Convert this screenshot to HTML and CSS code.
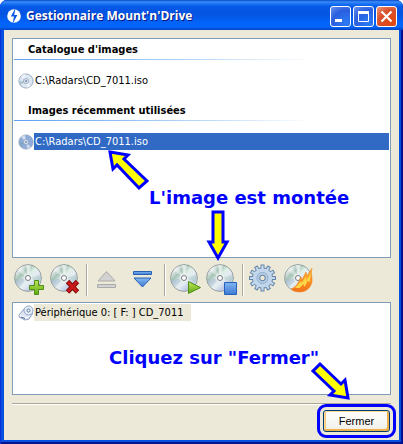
FILE: index.html
```html
<!DOCTYPE html>
<html lang="fr">
<head>
<meta charset="utf-8">
<title>Gestionnaire Mount'n'Drive</title>
<link rel="stylesheet" href="styles.css">
</head>
<body>
<svg class="defs" aria-hidden="true">
  <defs>
    <linearGradient id="silver" x1="0" y1="0" x2="1" y2="1">
      <stop offset="0" stop-color="#c4c8cc"/><stop offset=".18" stop-color="#e3e8e8"/>
      <stop offset=".32" stop-color="#a5c3b6"/><stop offset=".46" stop-color="#e0efe6"/>
      <stop offset=".6" stop-color="#e4ebf3"/><stop offset=".75" stop-color="#c0cae4"/>
      <stop offset="1" stop-color="#eef1f2"/>
    </linearGradient>
    <linearGradient id="green" x1="0" y1="0" x2="0" y2="1">
      <stop offset="0" stop-color="#c0e65a"/><stop offset="1" stop-color="#62a916"/>
    </linearGradient>
    <linearGradient id="blue" x1="0" y1="0" x2="0" y2="1">
      <stop offset="0" stop-color="#83b6f2"/><stop offset="1" stop-color="#3c79d2"/>
    </linearGradient>
    <linearGradient id="fire" x1="0" y1="0" x2="0" y2="1">
      <stop offset="0" stop-color="#ffb52e"/><stop offset="1" stop-color="#f4701a"/>
    </linearGradient>
    <symbol id="disc" viewBox="0 0 28 28">
      <circle cx="14" cy="14" r="13.4" fill="url(#silver)" stroke="#8d9a9a" stroke-width=".9"/>
      <path d="M14 14 3.500 6.500A13 13 0 0 1 8 2.500Z" fill="#fff" opacity=".4"/>
      <path d="M14 14 12 1.200A13 13 0 0 1 17 1.400Z" fill="#fff" opacity=".6"/>
      <path d="M14 14 1.200 16A13 13 0 0 0 5 23Z" fill="#aab8da" opacity=".5"/>
      <path d="M14 14 26.800 11A13 13 0 0 1 26.500 18Z" fill="#b0cfc4" opacity=".5"/>
      <circle cx="14" cy="14" r="4.500" fill="#e9edf0" opacity=".8"/>
      <circle cx="14" cy="14" r="2.500" fill="#fff" stroke="#777e80"/>
    </symbol>
    <symbol id="mini" viewBox="0 0 16 16">
      <circle cx="8" cy="8" r="7.100" fill="currentColor" stroke="#94a7be" stroke-width=".9"/>
      <path d="M8 8 3 3a7 7 0 0 1 4-1.800Z" fill="#fff" opacity=".6"/>
      <path d="M8 8 1.400 8.500a7 7 0 0 0 1.300 3Z" fill="#739fa5" opacity=".5"/>
      <path d="M8 8 13 13a7 7 0 0 1-4 1.800Z" fill="#fff" opacity=".5"/>
      <circle cx="8" cy="8" r="2.500" fill="#dfe8f4" stroke="#8d9fb9" stroke-width=".8"/>
      <circle cx="8" cy="8" r=".9" fill="#6681a0"/>
    </symbol>
  </defs>
</svg>
<main class="window">
  <header class="titlebar">
    <svg class="app-icon" viewBox="0 0 16 16" aria-hidden="true">
      <circle cx="8" cy="8" r="6.800" fill="#fff"/>
      <path d="M9.500 0 4.800 8.600H8L6.500 16l4.900-8.900H8.200Z" fill="#0757e6"/>
    </svg>
    <h1>Gestionnaire Mount'n'Drive</h1>
    <div class="controls">
      <button class="ctl" aria-label="Réduire"><svg viewBox="0 0 21 21"><path d="M5 13h7v3H5Z" fill="#fff"/></svg></button>
      <button class="ctl" aria-label="Agrandir"><svg viewBox="0 0 21 21"><path d="M5.500 5.500h10v10h-10Z" fill="none" stroke="#fff"/><path d="M5 5h11v3H5Z" fill="#fff"/></svg></button>
      <button class="ctl close" aria-label="Fermer la fenêtre"><svg viewBox="0 0 21 21"><path d="m5.500 5.500 10 10m0-10-10 10" stroke="#fff" stroke-width="2.200"/></svg></button>
    </div>
  </header>
  <div class="client">
    <section class="panel images">
      <h2>Catalogue d'images</h2>
      <div class="row"><svg class="small" aria-hidden="true"><use href="#mini"/></svg><span class="name">C:\Radars\CD_7011.iso</span></div>
      <h2>Images récemment utilisées</h2>
      <div class="row selected"><svg class="small" aria-hidden="true"><use href="#mini"/></svg><span class="name">C:\Radars\CD_7011.iso</span></div>
      <svg class="arrow arrow-image" viewBox="0 0 44 44" aria-hidden="true"><path d="m4 4 18 3-4 4 23 22-8 7-22-23-4 4Z"/></svg>
      <p class="note note-image">L'image est montée</p>
      <svg class="arrow arrow-tool" viewBox="0 0 26 54" aria-hidden="true"><path d="M8 3h10v30h4l-9 16-9-16h4Z"/></svg>
    </section>
    <nav class="toolbar" aria-label="Outils">
      <button class="tool" aria-label="Ajouter une image"><svg viewBox="0 0 32 32"><use href="#disc" width="28" height="28"/><path d="M20.500 16.500h4v5h5v4h-5v5h-4v-5h-5v-4h5Z" fill="url(#green)" stroke="#4b9015"/></svg></button>
      <button class="tool" aria-label="Supprimer l'image"><svg viewBox="0 0 32 32"><use href="#disc" width="28" height="28"/><path d="m17.500 17.500 10 10.500m0-10.500-10 10.500" stroke="#850b0b" stroke-width="4.800"/><path d="m18 18 9 9.500m0-9.500-9 9.500" stroke="#c71a1a" stroke-width="2.800"/></svg></button>
      <span class="rule"></span>
      <button class="tool" aria-label="Éjecter"><svg viewBox="0 0 32 32"><path d="M14.500 7.500 23 17H6Z" fill="#d2d2d2" stroke="#aaa"/><path d="M5.500 20.500h18v3h-18Z" fill="#d2d2d2" stroke="#aaa"/></svg></button>
      <button class="tool" aria-label="Monter"><svg viewBox="0 0 32 32"><path d="M5.500 7.500h18v3h-18Z" fill="url(#blue)" stroke="#2761b5"/><path d="M6 14h17l-8.500 9Z" fill="url(#blue)" stroke="#2761b5"/></svg></button>
      <span class="rule"></span>
      <button class="tool" aria-label="Monter l'image"><svg viewBox="0 0 32 32"><use href="#disc" width="28" height="28"/><path d="M18.500 17.500 30.500 23.500 18.500 29.500Z" fill="url(#green)" stroke="#4b9015"/></svg></button>
      <button class="tool" aria-label="Démonter l'image"><svg viewBox="0 0 32 32"><use href="#disc" width="28" height="28"/><path d="M18.500 18.500h12v12h-12Z" fill="url(#blue)" stroke="#2662bc"/></svg></button>
      <span class="rule"></span>
      <button class="tool" aria-label="Préférences"><svg viewBox="0 0 32 32">
        <path d="M1 14h27M14.500.500v27M2.800 7.250 26.200 20.750M7.750 2.300 21.250 25.700M2.800 20.750 26.200 7.250M7.750 25.700 21.250 2.300" stroke="#6485aa" stroke-width="4"/>
        <circle cx="14.500" cy="14" r="10.200" fill="#c2d7ec" stroke="#6485aa"/>
        <path d="M2 14h25M14.500 1.500v25M3.700 7.750 25.300 20.250M8.250 3.200 20.750 24.800M3.700 20.250 25.300 7.750M8.250 24.800 20.750 3.200" stroke="#c2d7ec" stroke-width="2.200"/>
        <circle cx="14.500" cy="14" r="5.500" fill="#b5cde5" stroke="#8fadcd"/>
        <circle cx="14.500" cy="14" r="2.800" fill="#ece9d8" stroke="#5b7b9f"/></svg></button>
      <button class="tool" aria-label="Graver"><svg viewBox="0 0 32 32"><use href="#disc" width="28" height="28"/><path d="M7 25c3-1 5-3 7-6l3-6 1 3 4-8 1 4 5-8c-1 4-.5 7 0 10 1 8-5 14-12 14-4 0-7-1-9-3Z" fill="url(#fire)" stroke="#f08a20" stroke-width=".6"/><path d="m11 24 6-7 .5 2 5-7-.5 5 5-8-1.500 9-2-1-3 6-1-3-4 4Z" fill="#ffd84a"/></svg></button>
    </nav>
    <section class="panel devices">
      <div class="row device"><svg class="small" viewBox="0 0 16 16" aria-hidden="true"><path d="m1 10 5-6 9 4-4 6-4 1-6-3Z" fill="#dfe6f3" stroke="#8ea1c2"/><path d="m1.500 10.500 7 2.500 5-5" fill="none" stroke="#fff"/><circle cx="10.500" cy="5.500" r="4.500" fill="#e6edf7" stroke="#8fa3c6"/><circle cx="10.500" cy="5.500" r="1.500" fill="#fff" stroke="#5774a0"/><path d="m3 12 4 1.500" stroke="#4a669e"/></svg><span class="name">Périphérique 0: [ F: ] CD_7011</span></div>
      <p class="note note-close">Cliquez sur "Fermer"</p>
    </section>
    <footer class="footer">
      <div class="action">
        <button class="push">Fermer</button>
        <svg class="arrow arrow-close" viewBox="0 0 44 42" aria-hidden="true"><path d="m10 4-7 7 21 20-4 4 18 3-3-18-4 4Z"/></svg>
      </div>
    </footer>
  </div>
</main>
</body>
</html>
```
FILE: styles.css
```css
* { box-sizing: border-box; }
body { margin: 0; background: #fff; font: 11px/18px "DejaVu Sans Condensed", "DejaVu Sans", sans-serif; font-stretch: condensed; color: #000; }
h1, h2, p { margin: 0; }
button { padding: 0; border: 0; background: none; font: inherit; color: inherit; }
svg { display: block; }
.defs { position: absolute; width: 0; height: 0; }
.window {
  display: flex; flex-direction: column; min-height: 100vh;
  padding: 0 4px 4px; border-radius: 7px 7px 0 0; background: #0650e0;
  box-shadow: inset 1px 0 #0831d9, inset -2px 0 #00138c, inset 0 -2px #00138c;
}
.titlebar {
  display: flex; align-items: center; gap: 4px; height: 30px; margin: 0 -4px; padding: 2px 6px 0 6px;
  border-radius: 7px 7px 0 0;
  background: linear-gradient(#0a4bcc 0, #3b8cf8 2px, #1670f4 4px, #0558e5 7px, #0554e2 14px, #0265fb 24px, #0264f8 27px, #0144c4 30px);
}
.app-icon { width: 16px; height: 16px; }
h1 { flex: 1; font: bold 12px/20px "Open Sans", sans-serif; color: #fff; text-shadow: 1px 1px #0a1883; white-space: nowrap; }
.controls { display: flex; gap: 2px; }
.ctl { width: 21px; height: 21px; border: 1px solid #fff; border-radius: 3px; background: radial-gradient(circle at 80% 85%, #2c7bf5, #2b5fdf 60%, #6b93ee); }
.ctl svg { width: 21px; height: 21px; margin: -1px; }
.close { background: radial-gradient(circle at 80% 85%, #e3480f, #d8502c 60%, #ee9a80); }
.client { flex: 1; display: flex; flex-direction: column; padding: 8px 8px 0; background: #ece9d8; }
.panel { position: relative; border: 1px solid #7f9db9; background: #fff; }
.images { flex: 1; padding: 3px 1px 0; }
h2 { height: 18px; padding-left: 14px; font-size: 11px; line-height: 16px; background: linear-gradient(90deg, #5ba0f2, #b9d8f8 50%, #fff 80%) bottom / 100% 1px no-repeat; }
.row { display: flex; align-items: center; padding-left: 4px; }
.images .row { margin: 12px 0; }
.small { width: 16px; height: 16px; color: #dce6f1; }
.name { height: 17px; padding: 0 1px; line-height: 17px; white-space: nowrap; }
.images h2 + .row { margin-bottom: 14px; }
.selected .name { flex: 1; background: #316ac5; color: #fff; }
.selected .small { color: #8eabd9; }
.toolbar { display: flex; align-items: center; gap: 4px; height: 44px; padding: 0 0 1px 2px; }
.tool { width: 32px; height: 32px; }
.rule { width: 2px; height: 32px; border-left: 1px solid #aca899; border-right: 1px solid #fff; }
.devices { height: 93px; padding: 1px; }
.device .name { padding-right: 7px; background: #ece9d8; }
.footer { display: flex; justify-content: flex-end; margin-top: 8px; padding: 6px 1px 8px; border-top: 1px solid #aca899; box-shadow: inset 0 1px #fff; }
.action { position: relative; }
.action::after { content: ""; position: absolute; inset: -6px; border: 3px solid #00f; border-radius: 9px; pointer-events: none; }
.push { display: block; width: 67px; height: 22px; border: 1px solid #003c74; border-radius: 3px; background: linear-gradient(#fff, #f0efe8); box-shadow: inset 1px 1px #fdd99b, inset -2px -2px #f0b149, inset 2px 0 #f8c878; font: 11px/18px "Liberation Sans", sans-serif; }
.note { position: absolute; font: bold 18px/20px "DejaVu Sans", sans-serif; color: #00f; white-space: nowrap; }
.note-image { left: 136px; top: 149px; }
.note-close { left: 96px; top: 45px; }
.arrow { position: absolute; z-index: 1; fill: #ff0; stroke: #00f; stroke-width: 3; }
.arrow-image { left: 93px; top: 109px; width: 44px; height: 44px; }
.arrow-tool { left: 192px; top: 170px; width: 26px; height: 54px; }
.arrow-close { left: -13px; top: -50px; width: 44px; height: 42px; }
```
